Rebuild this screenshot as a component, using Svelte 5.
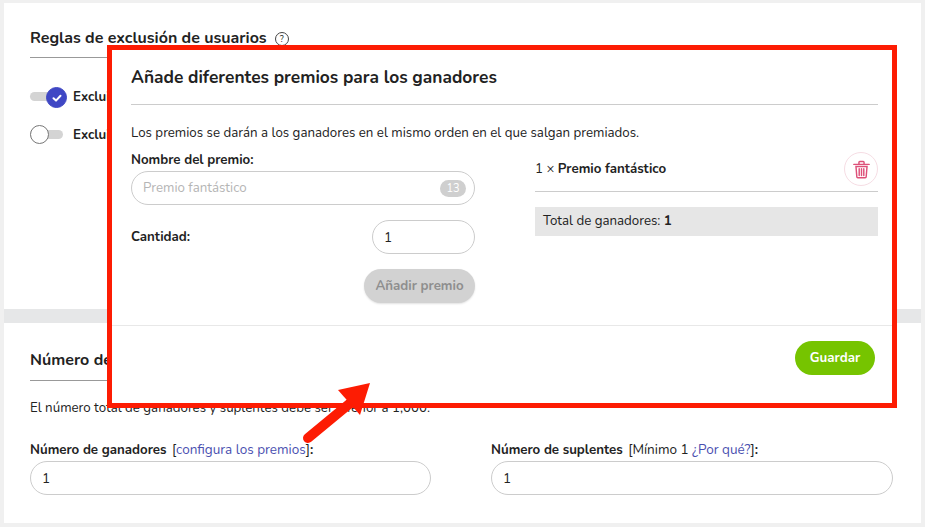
<script lang="ts">
	const toggles = [
		{ on: true, label: 'Excluir' },
		{ on: false, label: 'Excluir' }
	];
</script>

<div class="page">
	<section class="card card--top">
		<h2 class="heading">
			Reglas de exclusión de usuarios
			<span class="help">?</span>
		</h2>
		<div class="rules">
			{#each toggles as t}
				<div class="rule">
					<span class="switch" class:switch--on={t.on}>
						<span class="knob">
							{#if t.on}
								<svg viewBox="0 0 12 12" width="12" height="12"><path d="M2.500 6.300 5 8.600 9.500 3.800" fill="none" stroke="#fff" stroke-width="2" stroke-linecap="round" stroke-linejoin="round" /></svg>
							{/if}
						</span>
					</span>
					<span class="rule__label">{t.label}</span>
				</div>
			{/each}
		</div>
	</section>

	<section class="card card--bottom">
		<h2 class="heading">Número de ganadores y suplentes</h2>
		<p class="note">El número total de ganadores y suplentes debe ser inferior a 1,000.</p>
		<div class="fields">
			<div class="field">
				<div class="field__label"><b>Número de ganadores</b> <span class="bracket">[<a href="#a">configura los premios</a>]</span><b>:</b></div>
				<div class="input">1</div>
			</div>
			<div class="field">
				<div class="field__label"><b>Número de suplentes</b> <span class="bracket">[Mínimo 1 <a href="#b">¿Por qué?</a>]</span><b>:</b></div>
				<div class="input">1</div>
			</div>
		</div>
	</section>

	<div class="modal">
		<div class="modal__body">
			<h3 class="modal__title">Añade diferentes premios para los ganadores</h3>
			<p class="modal__intro">Los premios se darán a los ganadores en el mismo orden en el que salgan premiados.</p>
			<div class="columns">
				<div class="form">
					<div class="form__label">Nombre del premio:</div>
					<div class="input input--prize">
						<span class="placeholder">Premio fantástico</span>
						<span class="counter">13</span>
					</div>
					<div class="qty">
						<span class="form__label">Cantidad:</span>
						<div class="input input--qty">1</div>
					</div>
					<button class="btn btn--off">Añadir premio</button>
				</div>
				<div class="list">
					<div class="prize">
						<span>1 × <b>Premio fantástico</b></span>
						<span class="trash">
							<svg viewBox="0 0 20 22" width="17" height="19" fill="none" stroke="#dd5079" stroke-width="1.700" stroke-linecap="round">
								<path d="M1 5h18M7 4.600V2.600c0-.6.400-1 1-1h4c.6 0 1 .4 1 1v2" />
								<path d="M3.500 7.500h13l-1 12c0 .7-.5 1.200-1.200 1.200H5.700c-.7 0-1.200-.5-1.200-1.200z" />
								<path d="M7.300 10v8M10 10v8M12.700 10v8" />
							</svg>
						</span>
					</div>
					<div class="total">Total de ganadores: <b>1</b></div>
				</div>
			</div>
		</div>
		<div class="modal__foot">
			<button class="btn btn--save">Guardar</button>
		</div>
	</div>

	<svg class="arrow" viewBox="0 0 80 70" width="80" height="70">
		<path d="M9 60 55 22" stroke="#fd1c03" stroke-width="10" stroke-linecap="round" fill="none" />
		<path d="M39 12 71 5 61 37z" fill="#fd1c03" />
	</svg>
</div>

<style>
	:global(body) {
		margin: 0;
		background: #fff;
	}
	.page {
		position: relative;
		width: 925px;
		height: 527px;
		box-sizing: border-box;
		padding: 3px 4px 4px;
		background: #f0f0f0;
		display: flex;
		flex-direction: column;
		overflow: hidden;
		font-family: 'Nunito', 'Lato', 'Noto Sans', sans-serif;
		font-size: 13.3px;
		color: #222;
	}
	b {
		font-weight: 700;
	}
	a {
		color: #4a50b0;
		text-decoration: none;
	}
	.card {
		background: #fff;
		padding: 0 26px;
		box-sizing: border-box;
	}
	.card--top {
		height: 306px;
		padding-top: 25px;
	}
	.card--bottom {
		flex: 1;
		padding-top: 27px;
		border-top: 14px solid #e6e7e8;
	}
	.heading {
		margin: 0;
		height: 30px;
		border-bottom: 1px solid #999;
		font-size: 16px;
		font-weight: 700;
		line-height: 21px;
		color: #222;
		display: flex;
		align-items: flex-start;
		gap: 8px;
	}
	.card--top .heading {
		height: 29px;
	}
	.help {
		width: 12px;
		height: 12px;
		margin-top: 4px;
		border: 1px solid #444;
		border-radius: 50%;
		font-size: 9px;
		font-weight: 400;
		line-height: 12px;
		text-align: center;
	}
	.rules {
		margin-top: 29px;
		display: flex;
		flex-direction: column;
		gap: 19px;
	}
	.rule {
		display: flex;
		align-items: center;
		gap: 10px;
		height: 19px;
		font-weight: 700;
		font-size: 13.3px;
	}
	.switch {
		position: relative;
		width: 33px;
		height: 9px;
		border-radius: 5px;
		background: #d4d4d4;
	}
	.knob {
		position: absolute;
		top: -5px;
		left: 0;
		width: 17px;
		height: 17px;
		border: 1px solid #777;
		border-radius: 50%;
		background: #fff;
		display: flex;
		align-items: center;
		justify-content: center;
	}
	.switch--on .knob {
		left: auto;
		right: -4px;
		width: 19px;
		height: 19px;
		border-color: #3f47c4;
		background: #3f47c4;
	}
	.note {
		margin: 18px 0 0;
		height: 18px;
		line-height: 18px;
	}
	.fields {
		margin-top: 24px;
		display: grid;
		grid-template-columns: 401px 402px;
		column-gap: 60px;
	}
	.field__label {
		height: 20px;
		line-height: 18px;
		white-space: nowrap;
	}
	.bracket {
		font-weight: 400;
		font-size: 13.5px;
		margin-left: 2px;
	}
	.input {
		box-sizing: border-box;
		height: 34px;
		border: 1px solid #ccc;
		border-radius: 17px;
		padding: 0 11px;
		display: flex;
		align-items: center;
		background: #fff;
		font-size: 13.5px;
	}
	.modal {
		position: absolute;
		left: 107px;
		top: 45px;
		width: 790px;
		height: 363px;
		box-sizing: border-box;
		border: 5px solid #fd1c03;
		background: #fff;
		display: flex;
		flex-direction: column;
	}
	.modal__body {
		flex: 1;
		padding: 0 14px 0 19px;
	}
	.modal__title {
		margin: 0;
		height: 55px;
		box-sizing: border-box;
		padding-top: 17px;
		border-bottom: 1px solid #ccc;
		font-size: 17.350px;
		font-weight: 700;
		line-height: 21px;
		color: #222;
	}
	.modal__intro {
		margin: 19px 0 0;
		height: 18px;
		line-height: 18px;
	}
	.columns {
		margin-top: 9px;
		display: grid;
		grid-template-columns: 344px 343px;
		column-gap: 60px;
	}
	.form {
		display: flex;
		flex-direction: column;
	}
	.form__label {
		font-weight: 700;
		line-height: 18px;
	}
	.input--prize {
		margin-top: 2px;
		justify-content: space-between;
		padding: 0 8px 0 11px;
		font-size: 13.3px;
	}
	.placeholder {
		color: #b5b5b5;
	}
	.counter {
		width: 26px;
		height: 17px;
		border-radius: 9px;
		background: #cfcfcf;
		color: #fff;
		font-size: 11px;
		line-height: 17px;
		text-align: center;
	}
	.qty {
		margin-top: 15px;
		display: flex;
		align-items: center;
		justify-content: space-between;
	}
	.input--qty {
		width: 103px;
	}
	.btn {
		border: 0;
		border-radius: 17px;
		height: 34px;
		padding: 0 0 1px;
		font-family: inherit;
		font-weight: 700;
		font-size: 13.3px;
	}
	.btn--off {
		margin-top: 15px;
		align-self: flex-end;
		width: 111px;
		background: #d2d2d2;
		color: #8e8e8e;
		box-shadow: 0 1px 2px rgba(0, 0, 0, 0.12);
	}
	.list {
		display: flex;
		flex-direction: column;
	}
	.prize {
		height: 41px;
		box-sizing: border-box;
		padding: 1px 0 5px;
		margin-bottom: 15px;
		border-bottom: 1px solid #ccc;
		display: flex;
		align-items: center;
		justify-content: space-between;
	}
	.trash {
		width: 34px;
		height: 34px;
		box-sizing: border-box;
		border: 1px solid #f6dde4;
		border-radius: 50%;
		display: flex;
		align-items: center;
		justify-content: center;
	}
	.total {
		height: 29px;
		padding: 0 8px;
		background: #e6e6e6;
		line-height: 28px;
	}
	.modal__foot {
		height: 78px;
		box-sizing: border-box;
		border-top: 1px solid #e8e8e8;
		padding: 15px 17px 0 0;
		display: flex;
		justify-content: flex-end;
		align-items: flex-start;
	}
	.btn--save {
		width: 80px;
		background: #76c400;
		color: #fff;
	}
	.arrow {
		position: absolute;
		left: 299px;
		top: 378px;
	}
</style>
